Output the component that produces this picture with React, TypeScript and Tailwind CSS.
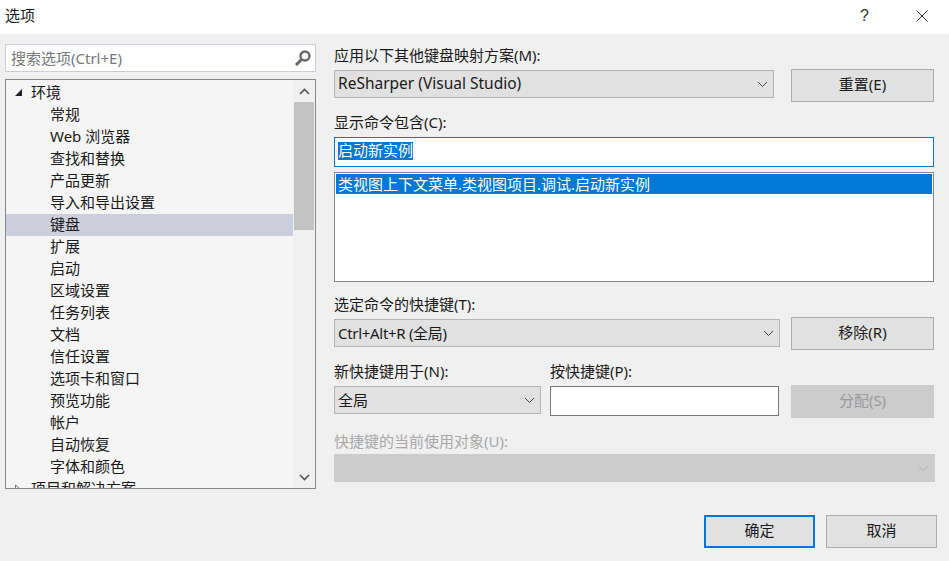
import React from "react";

const font = { fontFamily: '"Noto Sans", "Noto Sans CJK SC", sans-serif' };

const items = ["常规","Web 浏览器","查找和替换","产品更新","导入和导出设置","键盘","扩展","启动","区域设置","任务列表","文档","信任设置","选项卡和窗口","预览功能","帐户","自动恢复","字体和颜色"];

function Chevron({ className = "", sw = 1 }: { className?: string; sw?: number }) {
  return (
    <svg width="11" height="7" viewBox="0 0 11 7" className={className} fill="none" stroke="currentColor" strokeWidth={sw}>
      <path d="M1 1l4.5 4.5L10 1" />
    </svg>
  );
}

function Combo({ text, className = "", textClass = "", disabled = false }: { text: string; className?: string; textClass?: string; disabled?: boolean }) {
  return (
    <div className={`h-[28px] flex items-center justify-between pl-[3px] pr-[5px] border ${disabled ? "bg-[#cccccc] border-[#cccccc] text-[#a8a8a8]" : "bg-[#e1e1e1] border-[#b4b4b4] text-[#1a1a1a]"} ${className}`}>
      <span className={`leading-none whitespace-nowrap ${textClass}`}>{text}</span>
      <Chevron className={disabled ? "text-[#b0b0b0]" : "text-[#444444]"} />
    </div>
  );
}

function Btn({ text, disabled = false }: { text: string; disabled?: boolean }) {
  return (
    <div className={`w-[143px] h-[33px] shrink-0 flex items-center justify-center border pb-[2px] ${disabled ? "bg-[#cccccc] border-[#cccccc] text-[#9a9a9a]" : "bg-[#e1e1e1] border-[#adadad] text-[#1a1a1a]"}`}>
      {text}
    </div>
  );
}

export default function App() {
  return (
    <div style={font} className="w-[949px] h-[561px] bg-[#f0f0f0] text-[15px] text-[#1a1a1a] overflow-hidden flex flex-col">
      <div className="h-[34px] bg-white flex items-center justify-between pl-[5px] pr-[21px] shrink-0">
        <span className="pb-[4px]">选项</span>
        <div className="flex items-center gap-[47px] pb-[3px]">
          <span className="text-[16px] leading-none text-[#333333]" style={{ fontFamily: '"Liberation Sans", sans-serif' }}>?</span>
          <svg width="12" height="12" viewBox="0 0 12 12" fill="none" stroke="#333333" strokeWidth="1"><path d="M0.5 0.5l11 11M11.5 0.5l-11 11" /></svg>
        </div>
      </div>
      <div className="flex pl-[5px] pt-[10px]">
        <div className="w-[311px] shrink-0 flex flex-col">
          <div className="h-[28px] bg-white border border-[#cccedb] flex items-center justify-between pl-[5px] pr-[3px] text-[#777777]">
            <span>搜索选项(Ctrl+E)</span>
            <svg width="18" height="18" viewBox="0 0 18 18" fill="none" stroke="#666666"><circle cx="11" cy="7" r="4.5" strokeWidth="2.4" /><path d="M7.5 10.5L2 16" strokeWidth="3" /></svg>
          </div>
          <div className="mt-[7px] h-[410px] border border-[#828790] bg-[#f5f5f5] flex overflow-hidden">
            <div className="flex-1 overflow-hidden pt-[2px]">
              <div className="h-[22px] flex items-center pl-[8px] pb-[2px]">
                <svg width="9" height="9" viewBox="0 0 9 9" className="mr-[8px]"><path d="M8 1v7H1z" fill="#222222" /></svg>
                <span>环境</span>
              </div>
              {items.map((t) => (
                <div key={t} className={`h-[22px] flex items-center pl-[44px] pb-[2px] whitespace-nowrap ${t === "键盘" ? "bg-[#cccedb]" : ""}`}>{t}</div>
              ))}
              <div className="h-[22px] flex items-center pl-[8px] pb-[2px]">
                <svg width="9" height="9" viewBox="0 0 9 9" className="mr-[8px]"><path d="M1.5 1v7l4-3.5z" fill="none" stroke="#777777" /></svg>
                <span>项目和解决方案</span>
              </div>
            </div>
            <div className="w-[22px] shrink-0 bg-[#f0f0f0] flex flex-col items-center justify-between text-[#555555]">
              <div className="w-full flex flex-col items-center">
                <div className="h-[22px] flex items-center"><Chevron sw={1.6} className="rotate-180" /></div>
                <div className="w-[20px] h-[128px] bg-[#c2c2c2]" />
              </div>
              <div className="h-[22px] flex items-center"><Chevron sw={1.6} /></div>
            </div>
          </div>
        </div>
        <div className="w-[603px] ml-[18px] shrink-0 flex flex-col">
          <div className="h-[25px] leading-[22px]">应用以下其他键盘映射方案(M):</div>
          <div className="flex items-start h-[33px]">
            <Combo text="ReSharper (Visual Studio)" textClass="text-[15.5px]" className="w-[440px] mt-[1px]" />
            <div className="ml-[17px]"><Btn text="重置(E)" /></div>
          </div>
          <div className="h-[22px] mt-[10px] leading-[20px]">显示命令包含(C):</div>
          <div className="mt-[3px] h-[30px] w-[600px] bg-white border border-[#0078d7] flex items-center pl-[3px]">
            <span className="bg-[#0078d7] text-white h-[18px] leading-[17px] mb-[2px]">启动新实例</span>
          </div>
          <div className="mt-[5px] h-[110px] w-[600px] bg-white border border-[#828790] p-[1px]">
            <div className="bg-[#0078d7] text-white h-[20px] leading-[20px] pl-[2px]">类视图上下文菜单.类视图项目.调试.启动新实例</div>
          </div>
          <div className="h-[22px] mt-[12px] leading-[20px]">选定命令的快捷键(T):</div>
          <div className="flex items-start h-[33px] mt-[1px]">
            <Combo text="Ctrl+Alt+R (全局)" textClass="tracking-[-0.3px]" className="w-[446px] mt-[2px]" />
            <div className="ml-[11px]"><Btn text="移除(R)" /></div>
          </div>
          <div className="flex items-start mt-[11px]">
            <div className="w-[207px] shrink-0">
              <div className="h-[22px] leading-[20px]">新快捷键用于(N):</div>
              <Combo text="全局" className="w-[207px] mt-[3px]" />
            </div>
            <div className="w-[229px] ml-[9px] shrink-0">
              <div className="h-[22px] leading-[20px]">按快捷键(P):</div>
              <div className="mt-[3px] h-[30px] bg-white border border-[#7a7a7a]" />
            </div>
            <div className="ml-[12px] mt-[24px]"><Btn text="分配(S)" disabled /></div>
          </div>
          <div className="h-[22px] mt-[13px] leading-[20px] text-[#a8a8a8]">快捷键的当前使用对象(U):</div>
          <Combo text="" disabled className="w-[601px] mt-[1px]" />
          <div className="flex justify-end gap-[11px] mt-[33px] w-[603px]">
            <div className="w-[111px] h-[33px] flex items-center justify-center bg-[#e1e1e1] border-2 border-[#0078d7] pb-[2px]">确定</div>
            <div className="w-[111px] h-[33px] flex items-center justify-center bg-[#e1e1e1] border border-[#adadad] pb-[2px]">取消</div>
          </div>
        </div>
      </div>
    </div>
  );
}
